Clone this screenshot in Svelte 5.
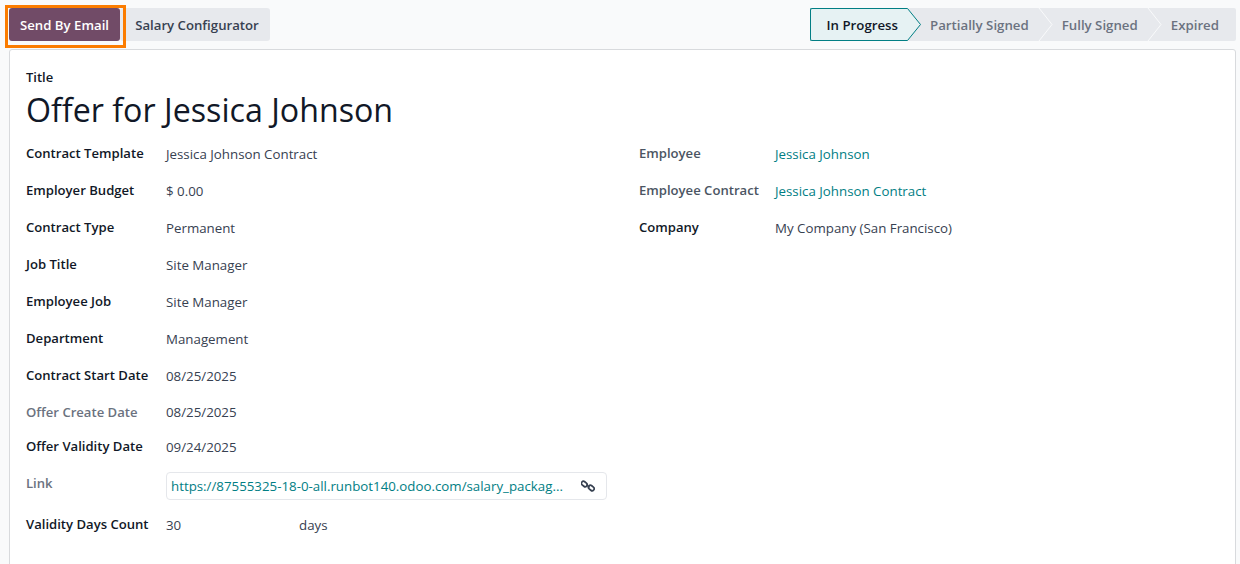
<script>
	const leftRows = [
		{ label: 'Contract Template', value: 'Jessica Johnson Contract' },
		{ label: 'Employer Budget', value: '$ 0.00' },
		{ label: 'Contract Type', value: 'Permanent' },
		{ label: 'Job Title', value: 'Site Manager' },
		{ label: 'Employee Job', value: 'Site Manager' },
		{ label: 'Department', value: 'Management' }
	];
	const rightRows = [
		{ label: 'Employee', value: 'Jessica Johnson', link: true, muted: true },
		{ label: 'Employee Contract', value: 'Jessica Johnson Contract', link: true, muted: true },
		{ label: 'Company', value: 'My Company (San Francisco)' }
	];
	const stages = ['Partially Signed', 'Fully Signed', 'Expired'];
</script>

<div class="page">
	<div class="topbar">
		<div class="actions">
			<span class="highlight"></span>
			<button class="primary">Send By Email</button>
			<button class="secondary">Salary Configurator</button>
		</div>
		<div class="statusbar">
			<div class="stage current">
				In Progress
				<svg class="arrow" width="16" height="33" viewBox="0 0 16 33">
					<path d="M0 0H1.5L14.5 16.5L1.5 33H0Z" fill="#e6f2f3" />
					<path d="M0 0.5H1.5L14.5 16.5L1.5 32.5H0" fill="none" stroke="#017e84" />
				</svg>
			</div>
			{#each stages as stage}
				<div class="stage">
					{stage}
					<svg class="arrow" width="16" height="33" viewBox="0 0 16 33">
						<path d="M1 0L14 16.5L1 33" fill="none" stroke="#f9fafb" />
					</svg>
				</div>
			{/each}
		</div>
	</div>

	<div class="sheet">
		<div class="title-label">Title</div>
		<h1>Offer for Jessica Johnson</h1>
		<div class="columns">
			<div class="group">
				{#each leftRows as row}
					<div class="row">
						<span class="label">{row.label}</span>
						<span class="value">{row.value}</span>
					</div>
				{/each}
				<div class="row start">
					<span class="label">Contract Start Date</span>
					<span class="value">08/25/2025</span>
				</div>
				<div class="row create">
					<span class="label dim">Offer Create Date</span>
					<span class="value">08/25/2025</span>
				</div>
				<div class="row validity">
					<span class="label">Offer Validity Date</span>
					<span class="value">09/24/2025</span>
				</div>
				<div class="row link-row">
					<span class="label dim">Link</span>
					<div class="link-box">
						<a href="#top">https://87555325-18-0-all.runbot140.odoo.com/salary_packag...</a>
						<svg width="14" height="14" viewBox="0 0 14 14" fill="none" stroke="#374151" stroke-width="1.7">
							<rect x="0.2" y="3" width="6.2" height="4" rx="2" transform="rotate(40 3.3 5)" />
							<rect x="7.2" y="7" width="6.2" height="4" rx="2" transform="rotate(40 10.3 9)" />
							<path d="M5.5 5.5L8.5 8.5" />
						</svg>
					</div>
				</div>
				<div class="row days">
					<span class="label">Validity Days Count</span>
					<span class="value count">30</span>
					<span class="value">days</span>
				</div>
			</div>
			<div class="group right">
				{#each rightRows as row}
					<div class="row">
						<span class="label" class:muted={row.muted}>{row.label}</span>
						<span class="value" class:link={row.link}>{row.value}</span>
					</div>
				{/each}
			</div>
		</div>
	</div>
</div>

<style>
	:global(body) {
		margin: 0;
		background: #f9fafb;
		font-family: 'Open Sans', 'Noto Sans', sans-serif;
		font-size: 13.3px;
		color: #374151;
	}

	.page {
		height: 564px;
		overflow: hidden;
		padding: 8px 4px 0 9px;
		box-sizing: border-box;
	}

	.topbar {
		display: flex;
		justify-content: space-between;
		height: 33px;
	}

	.actions {
		display: flex;
		position: relative;
	}

	.highlight {
		position: absolute;
		left: -4px;
		top: -3px;
		width: 115px;
		height: 37px;
		border: 3px solid #fb7c00;
		pointer-events: none;
		z-index: 1;
	}

	button {
		border: none;
		border-radius: 3px;
		font: 600 13.2px 'Open Sans', 'Noto Sans', sans-serif;
		padding: 0;
	}

	.primary {
		width: 111px;
		background: #714b67;
		color: #fff;
	}

	.secondary {
		width: 150px;
		padding-left: 4px;
		background: #e7e9ed;
		color: #374151;
	}

	.statusbar {
		display: flex;
		background: #e7e9ed;
		border-radius: 2px;
		font-size: 13.25px;
		font-weight: 600;
	}

	.stage {
		position: relative;
		display: flex;
		align-items: center;
		padding: 0 10px 0 23px;
		color: #6b7280;
		white-space: nowrap;
	}

	.stage:last-child {
		padding-right: 17px;
	}

	.stage:last-child .arrow {
		display: none;
	}

	.stage.current {
		color: #111827;
		background: #e6f2f3;
		border: 1px solid #017e84;
		border-right: none;
		border-radius: 2px 0 0 2px;
		padding: 0 9px 0 16px;
		z-index: 1;
	}

	.arrow {
		position: absolute;
		right: -15px;
		top: 0;
	}

	.stage.current .arrow {
		top: -1px;
	}

	.sheet {
		margin-top: 8px;
		height: 560px;
		background: #fff;
		border: 1px solid #d8dadd;
		border-radius: 3px;
		padding: 18px 16px 0;
		box-sizing: border-box;
	}

	.title-label {
		font-size: 13px;
		font-weight: 600;
		color: #111827;
		line-height: 18px;
	}

	h1 {
		margin: 0;
		font-size: 32.2px;
		font-weight: 400;
		line-height: 48px;
		color: #111827;
	}

	.columns {
		display: flex;
		gap: 32px;
		margin-top: 10px;
	}

	.group {
		width: 581px;
	}

	.row {
		display: flex;
		height: 37px;
		line-height: 20px;
	}

	.row.start {
		height: 36px;
	}

	.row.create {
		height: 35px;
	}

	.row.validity {
		height: 39px;
	}

	.row.link-row {
		height: 39px;
	}

	.label {
		width: 140px;
		flex: none;
		font-size: 13.1px;
		font-weight: 600;
		color: #111827;
		margin-top: -1px;
	}

	.row.create .label {
		margin-top: 0;
	}

	.link-row .label {
		margin-top: -3px;
	}

	.dim {
		color: #6b7280;
	}

	.muted {
		color: #4b5563;
	}

	.right .label {
		width: 136px;
	}

	.value {
		white-space: nowrap;
	}

	.link {
		color: #017e84;
	}

	.count {
		width: 133px;
	}

	.link-box {
		display: flex;
		align-items: center;
		justify-content: space-between;
		width: 441px;
		height: 28px;
		margin-top: -4px;
		padding: 0 11px 0 4px;
		box-sizing: border-box;
		border: 1px solid #e5e7eb;
		border-radius: 4px;
	}

	.link-box a {
		color: #017e84;
		text-decoration: none;
		white-space: nowrap;
	}
</style>
